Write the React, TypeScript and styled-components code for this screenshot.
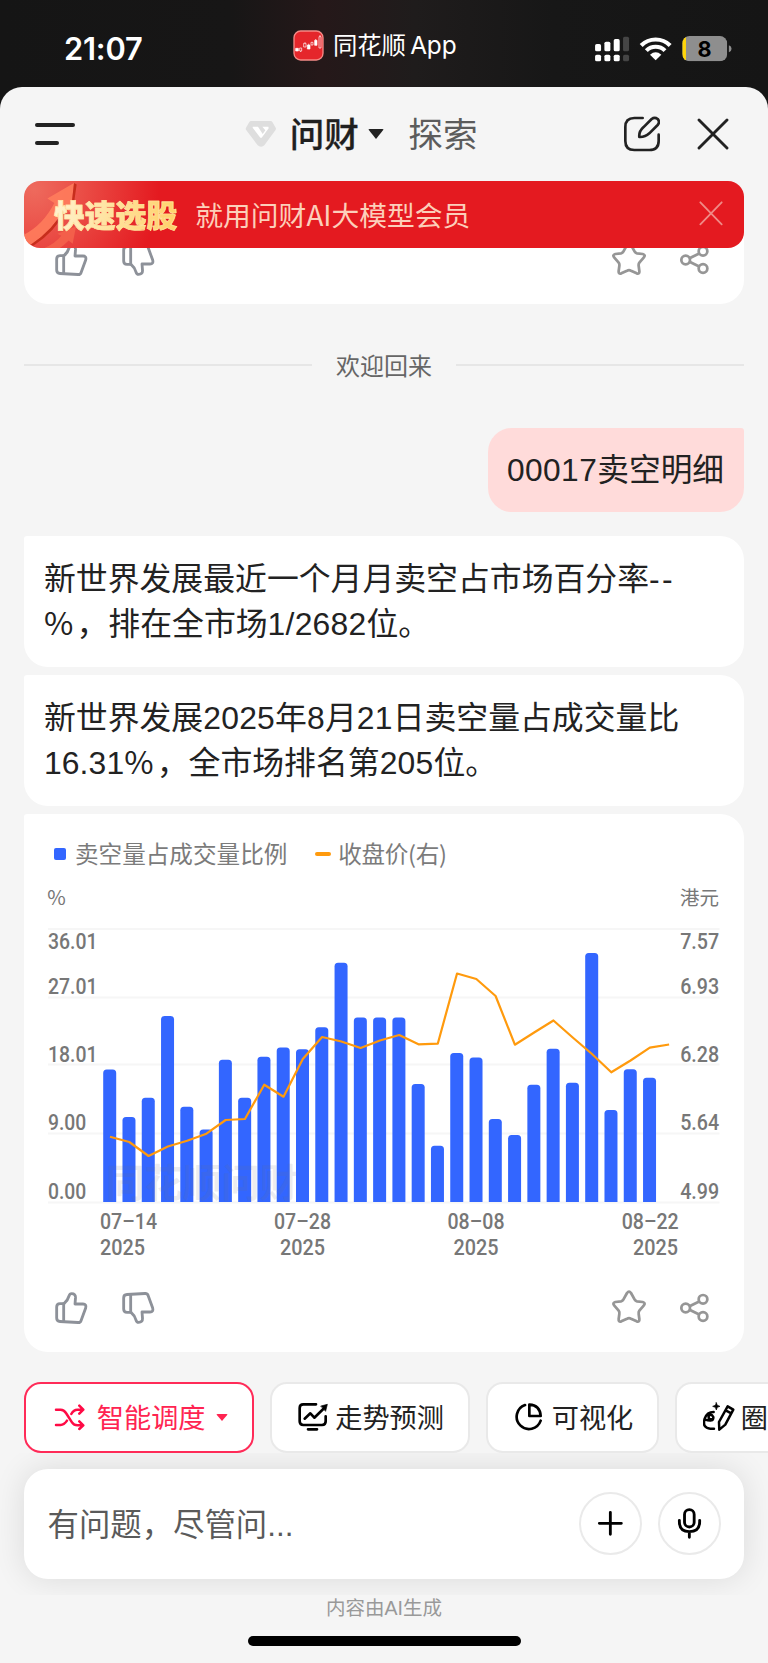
import React from "react";
import styled, { createGlobalStyle, css } from "styled-components";

const GlobalStyle = createGlobalStyle`
  html, body { margin: 0; padding: 0; background: #f5f5f5; }
  body { width: 768px; overflow: hidden; font-family: "Liberation Sans", "Noto Sans CJK SC", sans-serif; color: #222; }
  svg { display: block; flex: none; }
`;

const Screen = styled.div`
  width: 768px;
  height: 1663px;
  display: flex;
  flex-direction: column;
  overflow: hidden;
  background: linear-gradient(90deg, #151515 0%, #171616 30%, #251819 42%, #1f1c1c 54%, #171717 72%, #151515 100%) top / 100% 120px no-repeat;
`;

/* ---------- status bar ---------- */
const StatusBar = styled.div`
  height: 87px;
  flex: none;
  display: flex;
  align-items: flex-start;
  padding-left: 64px;
  box-sizing: border-box;
  color: #fff;
`;
const Clock = styled.div`
  width: 228.5px;
  margin-top: 30px;
  font: 600 30.8px/38px Inter, sans-serif;
  letter-spacing: -0.2px;
`;
const AppName = styled.div`
  display: flex;
  align-items: center;
  gap: 9.5px;
  margin-top: 29.5px;
  width: 302.5px;
  height: 31px;
  font: 400 24.4px/31px Inter, "Noto Sans CJK SC", sans-serif;
  letter-spacing: -0.1px;
  word-spacing: -2.5px;
  white-space: nowrap;
`;
const Indicators = styled.div`
  margin-top: 35px;
`;

/* ---------- sheet ---------- */
const Sheet = styled.div`
  flex: 1;
  display: flex;
  flex-direction: column;
  background: #f5f5f5;
  border-radius: 22px 22px 0 0;
`;
const Header = styled.div`
  height: 94px;
  flex: none;
  display: flex;
  align-items: center;
  padding-left: 35px;
`;
const MenuButton = styled.div`
  display: flex;
  flex-direction: column;
  gap: 13.5px;
  width: 210px;
`;
const MenuLine = styled.span<{ $w: number }>`
  width: ${(p) => p.$w}px;
  height: 4.5px;
  border-radius: 3px;
  background: #222;
`;
const Tab = styled.div<{ $active?: boolean }>`
  font-family: "Noto Sans CJK SC", sans-serif;
  font-size: 34.6px;
  line-height: 48px;
  padding-bottom: 4px;
  font-weight: ${(p) => (p.$active ? 500 : 400)};
  color: ${(p) => (p.$active ? "#1f1f1f" : "#5c5c5c")};
  ${(p) => p.$active && css`-webkit-text-stroke: 0.3px #1f1f1f;`}
  margin-left: ${(p) => (p.$active ? 13 : 24)}px;
  white-space: nowrap;
`;
const HeaderTabs = styled.div`
  display: flex;
  align-items: center;
  width: 379px;
`;
const Caret = styled.span<{ $size: number; $gap: number }>`
  display: block;
  margin-left: ${(p) => p.$gap}px;
  border-left: ${(p) => p.$size}px solid transparent;
  border-right: ${(p) => p.$size}px solid transparent;
  border-top: ${(p) => p.$size * 1.3}px solid currentColor;
  border-radius: 1.5px;
`;
const HeaderActions = styled.div`
  display: flex;
  align-items: center;
  gap: 37px;
`;

const Banner = styled.div`
  position: relative;
  z-index: 1;
  height: 67px;
  flex: none;
  margin: 0 24px;
  border-radius: 16px;
  overflow: hidden;
  display: flex;
  align-items: center;
  box-sizing: border-box;
  padding: 0 20.5px 1.5px 30px;
  background: radial-gradient(circle at 10px 8px, #ee6a5d 0, #ea4c45 50px, rgba(228, 26, 32, 0) 125px), #e41a20;
`;
const BannerArt = styled.svg`
  position: absolute;
  left: 0;
  top: 0;
`;
const BannerTitle = styled.div`
  position: relative;
  font: 900 30.8px/44px "Noto Sans CJK SC", sans-serif;
  background: linear-gradient(100deg, #fff3cf, #ffe19a 50%, #ffd067);
  background-clip: text;
  -webkit-background-clip: text;
  color: transparent;
  -webkit-text-stroke: 0.6px #ffe3a0;
`;
const BannerText = styled.div`
  flex: 1;
  margin-left: 18px;
  font: 400 27.8px/44px "Noto Sans CJK SC", sans-serif;
  color: #fccfba;
`;

/* ---------- conversation ---------- */
const Feed = styled.div`
  padding: 0 24px;
  display: flex;
  flex-direction: column;
`;
const Card = styled.div<{ $tail?: boolean; $top?: number }>`
  margin-top: ${(p) => p.$top ?? 8}px;
  background: #fff;
  border-radius: ${(p) => (p.$tail ? "0 0 24px 24px" : "3px 24px 24px 24px")};
`;
const Answer = styled(Card)`
  height: 131px;
  box-sizing: border-box;
  padding: 21px 20px;
  font-size: 31.85px;
  line-height: 45px;
  white-space: nowrap;
`;
const Latin = styled.span<{ $spacing?: number }>`
  letter-spacing: ${(p) => p.$spacing ?? 0.25}px;
`;
const Percent = styled.span`
  font-family: "Noto Sans CJK SC", sans-serif;
  line-height: 0;
  letter-spacing: 3.2px;
`;
const Welcome = styled.div`
  display: flex;
  align-items: center;
  gap: 24px;
  height: 36px;
  margin-top: 43px;
  font-size: 24px;
  line-height: 36px;
  color: #666;
  &::before, &::after {
    content: "";
    flex: 1;
    height: 2px;
    background: #e6e6e6;
  }
`;
const WelcomeText = styled.span`
  padding-top: 3px;
`;
const Question = styled.div`
  align-self: flex-end;
  margin-top: 45px;
  height: 84px;
  padding: 0 20px 0 19px;
  font-size: 31.7px;
  line-height: 84px;
  background: #ffdbda;
  border-radius: 24px 3px 24px 24px;
`;
const Legend = styled.div`
  height: 66px;
  box-sizing: border-box;
  padding: 14px 0 0 30px;
  display: flex;
  align-items: center;
  font: 400 23.6px/36px "Noto Sans CJK SC", sans-serif;
  color: #7b7b7b;
`;
const LegendText = styled.span<{ $spacing?: number }>`
  padding-bottom: 2px;
  letter-spacing: ${(p) => p.$spacing ?? 0}px;
`;
const LegendMark = styled.span<{ $line?: boolean }>`
  width: ${(p) => (p.$line ? 16 : 12)}px;
  height: ${(p) => (p.$line ? 4 : 12)}px;
  margin: ${(p) => (p.$line ? "0 7px 0 28px" : "0 9px 0 0")};
  border-radius: 2px;
  background: ${(p) => (p.$line ? "#ff9a0d" : "#3366ff")};
`;
const Actions = styled.div`
  height: 82px;
  box-sizing: border-box;
  padding: 20px 29.3px 0;
  display: flex;
  gap: 30px;
`;
const Spacer = styled.div`
  flex: 1;
`;

/* ---------- bottom ---------- */
const Chips = styled.div`
  display: flex;
  flex: none;
  gap: 16px;
  width: 900px;
  margin: 30px 0 0 24px;
`;
const Chip = styled.div<{ $primary?: boolean; $w: number }>`
  width: ${(p) => p.$w}px;
  height: 70.5px;
  box-sizing: border-box;
  border: 2px solid ${(p) => (p.$primary ? "#ff2b58" : "#e9e9e9")};
  border-radius: 17px;
  background: #fff;
  display: flex;
  align-items: center;
  padding-left: ${(p) => (p.$primary ? 28 : 26)}px;
  font-size: 27.2px;
  white-space: nowrap;
  color: ${(p) => (p.$primary ? "#ff2451" : "#222")};
`;
const ChipText = styled.span<{ $gap: number }>`
  margin-left: ${(p) => p.$gap}px;
  padding-bottom: 2px;
`;
const Composer = styled.div`
  flex: none;
  height: 142.5px;
  box-sizing: border-box;
  padding: 16px 24px;
  overflow: hidden;
`;
const InputBox = styled.div`
  height: 110.5px;
  box-sizing: border-box;
  border-radius: 24px;
  background: #fff;
  box-shadow: 0 0 32px rgba(0, 0, 0, 0.11);
  display: flex;
  align-items: center;
  padding: 0 23.5px;
  gap: 16px;
`;
const Placeholder = styled.div`
  flex: 1;
  padding-bottom: 2px;
  font-size: 31.4px;
  color: #5a5a5a;
`;
const RoundButton = styled.div`
  width: 63px;
  height: 63px;
  box-sizing: border-box;
  border: 2px solid #eaeaea;
  border-radius: 50%;
  display: flex;
  align-items: center;
  justify-content: center;
`;
const Footnote = styled.div`
  text-align: center;
  font: 400 19.5px/26px "Liberation Sans", "Noto Sans CJK SC", sans-serif;
  color: #999;
`;
const HomeIndicator = styled.div`
  width: 273px;
  height: 10px;
  border-radius: 5px;
  background: #000;
  margin: 15px auto 0;
`;

/* ---------- icons ---------- */
type IconProps = {
  box: string;
  w: number;
  h: number;
  color?: string;
  sw?: number;
  children: React.ReactNode;
};
const Icon = ({ box, w, h, color = "#000", sw = 6, children }: IconProps) => (
  <svg viewBox={box} width={w} height={h} fill="none" stroke={color} strokeWidth={sw} strokeLinecap="round" strokeLinejoin="round">
    {children}
  </svg>
);

const thumb = (
  <>
    <path d="M193 791H181Q171 791 171 801V834Q171 844 181 844.500L235 847.500Q242 848 244 842L258 804Q261 792 250 792H226L227.500 773Q228 761 216 761Q210 761 208 768Q204 782 193 791Z" />
    <path d="M192 791V844" />
  </>
);

const ActionBar = () => (
  <Actions>
    <Icon box="160 750 110 110" w={36.7} h={36.7} color="#8d9199" sw={8.5}>{thumb}</Icon>
    <Icon box="160 750 110 110" w={36.7} h={36.7} color="#8d9199" sw={8.5}>
      <g transform="translate(0 1608) scale(1 -1)">{thumb}</g>
    </Icon>
    <Spacer />
    <Icon box="730 750 110 110" w={36.7} h={36.7} color="#969696" sw={8.2}>
      <path d="M778 759Q784 751 790 759L801 779Q803 783 808 784L825 786Q835 789 828 797L815 812Q812 816 813 822L815 837Q816 847 807 844L790 836Q784 833 778 836L761 844Q752 847 753 837L755 822Q756 816 753 812L740 797Q733 789 743 786L760 784Q765 783 767 779Z" />
    </Icon>
    <Icon box="930 750 110 110" w={36.7} h={36.7} color="#969696" sw={8.2}>
      <circle cx="953" cy="804" r="13" />
      <circle cx="1005" cy="778" r="13" />
      <circle cx="1005" cy="829.5" r="13" />
      <path d="M966 798L992 785M966 810L992 823" />
    </Icon>
  </Actions>
);

/* ---------- chart ---------- */
const barTops = [
  1069.5, 1117, 1097.7, 1016, 1106.7, 1129.5, 1059.7, 1097.7, 1056.7, 1047.5, 1049.3, 1027.3, 962.7, 1017.5, 1017.5,
  1017.5, 1084, 1145.7, 1053, 1057.5, 1119, 1135, 1084.7, 1048.7, 1082.7, 953, 1110, 1069.3, 1077.7,
];
const priceY = [
  1136.7, 1142, 1156, 1146.5, 1140.7, 1133.7, 1120, 1119, 1084.7, 1096.7, 1059, 1037, 1041.5, 1048, 1040.5, 1035,
  1044.3, 1043.7, 973.5, 979, 996, 1044.7, 1032.5, 1020.5, 1037.5, 1054, 1072.3, 1060.5, 1047.7, 1044.5,
];
const pitch = 19.28;
const gridY = [929, 997.5, 1064.5, 1133.5, 1202.5];
const axisY = [949.4, 993.6, 1062.3, 1130.3, 1198.5];
const leftAxis: [string, number][] = [["36.01", 49.5], ["27.01", 49.5], ["18.01", 49.5], ["9.00", 38.3], ["0.00", 38.3]];
const rightAxis = ["7.57", "6.93", "6.28", "5.64", "4.99"];
const dates: [string, number, number][] = [
  ["07–14", 100, 100],
  ["07–28", 274, 280],
  ["08–08", 447.5, 453.5],
  ["08–22", 621.7, 633],
];

const Chart = () => (
  <svg viewBox="24 880 720 390" width="720" height="390" fontFamily="Roboto, 'Noto Sans CJK SC', sans-serif" fontSize="21.6" fill="#777">
    <text x="47.3" y="905" fontSize="20" textLength="18.5" lengthAdjust="spacingAndGlyphs" fontFamily="'Noto Sans CJK SC'">%</text>
    <text x="680" y="905" fontSize="19.5" fontFamily="'Noto Sans CJK SC'">港元</text>
    {gridY.map((y) => (
      <path key={y} d={`M48 ${y}H719.5`} stroke="#f6f6f6" strokeWidth="2" />
    ))}
    {barTops.map((y, i) => {
      const x = 103.2 + i * pitch;
      return <path key={i} fill="#3366ff" d={`M${x} 1202V${y + 3.5}q0-3.5 3.5-3.5h6q3.5 0 3.5 3.5V1202Z`} />;
    })}
    <text x="106" y="1197" fontSize="38.4" fontWeight="700" fill="rgba(110,110,120,0.12)" fontFamily="'Noto Sans CJK SC'">
      同花顺问财
    </text>
    <polyline fill="none" stroke="#ff9a0d" strokeWidth="2.2" strokeLinejoin="round" points={priceY.map((y, i) => `${110 + i * pitch},${y}`).join(" ")} />
    <g fontWeight="500">
      {leftAxis.map(([t, w], i) => (
        <text key={t} x="48" y={axisY[i]} textLength={w} lengthAdjust="spacingAndGlyphs">{t}</text>
      ))}
      {rightAxis.map((t, i) => (
        <text key={t} x="680.2" y={axisY[i]} textLength="39" lengthAdjust="spacingAndGlyphs">{t}</text>
      ))}
      {dates.map(([d, x, x2]) => (
        <g key={d}>
          <text x={x} y="1229.3" textLength="57" lengthAdjust="spacingAndGlyphs">{d}</text>
          <text x={x2} y="1254.5" textLength="45" lengthAdjust="spacingAndGlyphs">2025</text>
        </g>
      ))}
    </g>
  </svg>
);

export default function App() {
  return (
    <Screen lang="zh-CN">
      <GlobalStyle />
      <StatusBar>
        <Clock>21:07</Clock>
        <AppName>
          <svg viewBox="173 27 93 93" width="31" height="31">
            <rect x="176" y="30" width="87" height="87" rx="20" fill="#e5262b" stroke="#f58a86" strokeWidth="4" />
            <g fill="#fff" stroke="#fff" strokeWidth="2">
              <path d="M181 82h8v8h-8ZM216 72h8v12h-8ZM238 58h7v15h-7Z" />
              <path fill="none" d="M193 81h6v9h-6ZM205 67h7v11h-7ZM227 64h6v8h-6ZM251 47h6v34h-6ZM254 42v5M209 64v3M220 68v4M241 54v4M196 90v3" />
            </g>
          </svg>
          同花顺 App
        </AppName>
        <Indicators>
          <svg viewBox="45 45 415 82" width="138.3" height="27.3">
            {[72, 65, 57, 50].map((y, i) => (
              <g key={y} fill={i < 3 ? "#fff" : "#454545"}>
                <rect x={45 + i * 28} y={y} width="18" height={94 - y} rx="5" />
                <rect x={45 + i * 28} y="104" width="18" height="20" rx="5" />
              </g>
            ))}
            <g fill="none" stroke="#fff" strokeWidth="12.5">
              <path d="M183.500 76.500A61.500 61.500 0 0 1 270.500 76.500" />
              <path d="M199 92A39.600 39.600 0 0 1 255 92" />
            </g>
            <path d="M227 121L210 104Q227 90 244 104Z" fill="#fff" />
            <clipPath id="cell"><rect x="307" y="48" width="135" height="76" rx="22" /></clipPath>
            <g clipPath="url(#cell)">
              <rect x="307" y="48" width="135" height="76" fill="#8e8e8e" />
              <rect x="307" y="48" width="11" height="76" fill="#ffd60a" />
            </g>
            <path d="M447 76Q455 78 455 86.500Q455 95 447 97Z" fill="#8e8e8e" />
            <text x="374" y="110" textAnchor="middle" fontFamily="Inter" fontWeight="700" fontSize="65" fill="#000">8</text>
          </svg>
        </Indicators>
      </StatusBar>

      <Sheet>
        <Header>
          <MenuButton>
            <MenuLine $w={39.5} />
            <MenuLine $w={24} />
          </MenuButton>
          <HeaderTabs>
            <svg viewBox="30 303 95 84" width="31.7" height="28">
              <path d="M48 306H107Q110 306 112 309L122 326Q124 330 121 334L88 379Q84 383 78 383Q72 383 68 379L34 334Q31 330 33 326L43 309Q45 306 48 306Z" fill="#dedede" />
              <path d="M53 323H69L83 345L91 334L82 323H100L101 328L80 356H76L53 326Z" fill="#fff" />
            </svg>
            <Tab $active>问财</Tab>
            <Caret $size={8} $gap={9.5} />
            <Tab>探索</Tab>
          </HeaderTabs>
          <HeaderActions>
            <Icon box="132 288 108 108" w={36} h={36} color="#222" sw={8}>
              <path d="M188 294H163Q136 294 136 321V363Q136 390 163 390H208Q236 390 236 363V344" />
              <path d="M178 351Q176 335 190 322L215 297Q224 290 233 297Q241 306 233 315L208 340Q195 352 178 351Z" />
            </Icon>
            <Icon box="350 294 96 96" w={32} h={32} color="#222" sw={8.5}>
              <path d="M356 300L440 384M440 300L356 384" />
            </Icon>
          </HeaderActions>
        </Header>

        <Banner>
          <BannerArt width="70" height="67.5" viewBox="72 34 210 202">
            <path d="M72 195Q130 165 163 100L142 86L222 40L212 130L195 114Q160 180 92 225L72 232Z" fill="#ff7c5c" opacity="0.9" />
            <path d="M222 40L230 44L217 134L212 130ZM195 114L201 118Q164 188 100 228L92 225Q160 180 195 114Z" fill="#c72e1c" />
            <path d="M130 236Q165 222 184 198L172 192L228 170L218 222L206 212Q192 226 178 236Z" fill="#f4624b" opacity="0.9" />
          </BannerArt>
          <BannerTitle>快速选股</BannerTitle>
          <BannerText>就用问财AI大模型会员</BannerText>
          <Icon box="944 97 74 74" w={24.7} h={24.7} color="#f08a86" sw={5.5}>
            <path d="M948 101L1012 167M1012 101L948 167" />
          </Icon>
        </Banner>

        <Feed>
          <Card $tail $top={-26}>
            <ActionBar />
          </Card>
          <Welcome>
            <WelcomeText>欢迎回来</WelcomeText>
          </Welcome>
          <Question>
            <Latin $spacing={0.45}>00017</Latin>卖空明细
          </Question>
          <Answer $top={24}>
            新世界发展最近一个月月卖空占市场百分率<Latin $spacing={2.4}>--</Latin>
            <br />
            <Percent>%</Percent>，排在全市场<Latin>1/2682</Latin>位。
          </Answer>
          <Answer>
            新世界发展<Latin>2025</Latin>年<Latin>8</Latin>月<Latin>21</Latin>日卖空量占成交量比
            <br />
            <Latin $spacing={0.1}>16.31</Latin>
            <Percent>%</Percent>，全市场排名第<Latin>205</Latin>位。
          </Answer>
          <Card>
            <Legend>
              <LegendMark />
              <LegendText>卖空量占成交量比例</LegendText>
              <LegendMark $line />
              <LegendText $spacing={-0.35}>收盘价(右)</LegendText>
            </Legend>
            <Chart />
            <ActionBar />
          </Card>
        </Feed>

        <Chips>
          <Chip $primary $w={230}>
            <Icon box="160 130 94 84" w={31.3} h={28} color="#ff0a45" sw={7.5}>
              <path d="M166 150H180Q190 150 196 160L214 188Q220 197 230 197H247M166 196H180Q190 196 199 183M212 163Q219 150 230 150H247M236 138L248 150L236 162M236 185L248 197L236 208" />
            </Icon>
            <ChipText $gap={11.5}>智能调度</ChipText>
            <Caret $size={6} $gap={10} />
          </Chip>
          <Chip $w={200}>
            <Icon box="894 128 92 90" w={30.7} h={30} sw={8}>
              <path d="M948 135H910Q899 135 899 146V186Q899 197 910 197H966Q977 197 977 186V171M914 178L931 162L943 175L972 147M924 210H951" />
              <path d="M963 140L982 135L977 155Z" fill="#000" strokeWidth="2" />
            </Icon>
            <ChipText $gap={6.5}>走势预测</ChipText>
          </Chip>
          <Chip $w={173}>
            <Icon box="441 128 92 90" w={30.7} h={30} sw={8}>
              <path d="M474 137A37 37 0 1 0 521 184" />
              <path d="M487 136V170H521Q519 138 487 136Z" />
            </Icon>
            <ChipText $gap={7}>可视化</ChipText>
          </Chip>
          <Chip $w={200}>
            <Icon box="1006 128 100 90" w={33.3} h={30} sw={7.5}>
              <path d="M1080 141L1097 151L1073 196L1055 211L1054 188ZM1074 153L1091 162" />
              <path d="M1038 158Q1018 158 1011 178Q1003 207 1028 208H1039M1011 180Q1038 190 1037 173Q1030 160 1023 171Q1022 180 1031 180" />
              <path d="M1046 130L1049 138L1057 141L1049 144L1046 152L1043 144L1035 141L1043 138Z" fill="#000" strokeWidth="2" />
            </Icon>
            <ChipText $gap={4.5}>圈</ChipText>
          </Chip>
        </Chips>

        <Composer>
          <InputBox>
            <Placeholder>有问题，尽管问...</Placeholder>
            <RoundButton>
              <Icon box="687 452 80 80" w={26.7} h={26.7} sw={8.5}>
                <path d="M727 459V525M694 492H760" />
              </Icon>
            </RoundButton>
            <RoundButton>
              <Icon box="923 442 80 100" w={26.7} h={33.3} sw={8.5}>
                <rect x="948.5" y="450" width="29" height="52" rx="14.5" />
                <path d="M933 482V486Q933 516 963 516Q994 516 994 486V482M963 516V533" />
              </Icon>
            </RoundButton>
          </InputBox>
        </Composer>
        <Footnote>内容由AI生成</Footnote>
        <HomeIndicator />
      </Sheet>
    </Screen>
  );
}
